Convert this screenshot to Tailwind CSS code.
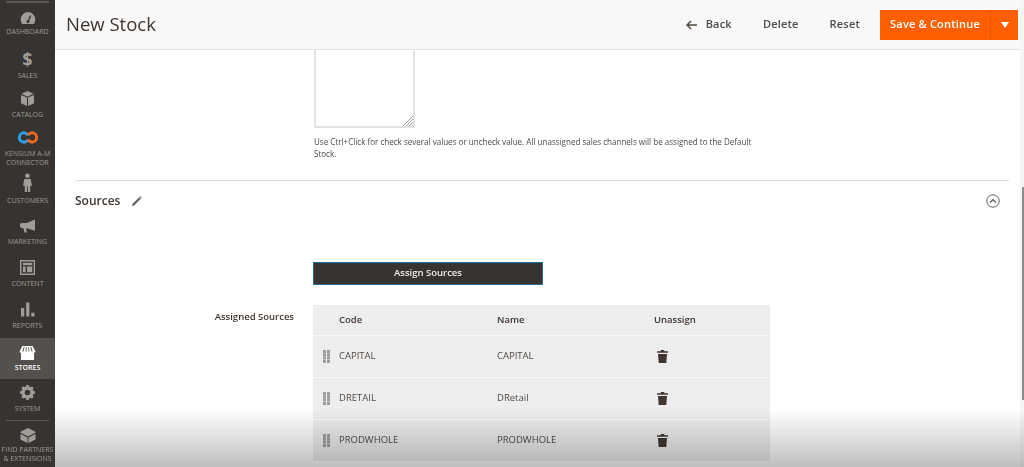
<!DOCTYPE html>
<html lang="en">
  <head>
    <meta charset="UTF-8" />
    <meta name="viewport" content="width=device-width, initial-scale=1.0" />
    <title>New Stock</title>
    <script src="https://cdn.jsdelivr.net/npm/@tailwindcss/browser@4"></script>
  </head>
  <body class="relative flex h-[467px] w-[1024px] overflow-hidden bg-white font-['Open_Sans',sans-serif] text-[#41362f] blur-[0.5px]">
    <!-- sidebar -->
    <nav class="flex h-[467px] w-[55px] shrink-0 flex-col bg-[#373330] text-center text-[7px] uppercase leading-[9px] text-[#a09c96]">
      <div class="mx-[6px] mt-[1px] h-[2px] bg-[#5c5853]"></div>
      <a class="flex h-[37px] flex-col items-center pt-[9px]">
        <svg class="h-[12px] w-[16px]" viewBox="0 0 18 14"><path fill="#a09c96" d="M9 0a8.500 8.500 0 0 0-8.500 8.500c0 2.300.7 4 1.800 5.500h13.400c1.100-1.500 1.800-3.200 1.800-5.500A8.500 8.500 0 0 0 9 0z"/><path stroke="#373330" stroke-width="1.600" d="M9 11 12 4"/><circle cx="9" cy="11" r="1.800" fill="#373330"/></svg>
        <span class="mt-[3px]">Dashboard</span>
      </a>
      <a class="flex h-[42px] flex-col items-center pt-[9px]">
        <span class="h-[20px] text-[18px] font-bold leading-[20px]">$</span>
        <span class="mt-[2px]">Sales</span>
      </a>
      <a class="flex h-[42px] flex-col items-center pt-[9px]">
        <svg class="h-[15px] w-[13px]" viewBox="0 0 14 16"><path fill="#a09c96" d="M7 0 13.500 3 7 6 .5 3zM0 4.200 6.400 7v9L0 13zM14 4.200 7.600 7v9l6.400-3z"/></svg>
        <span class="mt-[4px]">Catalog</span>
      </a>
      <a class="flex h-[47px] flex-col items-center pt-[7px]">
        <svg class="h-[13px] w-[22px]" viewBox="0 0 22 14" fill="none" stroke-width="3.200"><path stroke="#2d9fe6" d="M11 4.500C9.500 2.800 8.300 2 6.700 2a5 5 0 0 0 0 10c1.600 0 2.800-.6 4.300-2.300"/><path stroke="#f0681f" d="M11 9.500c1.500 1.700 2.700 2.500 4.300 2.500a5 5 0 0 0 0-10c-1.600 0-2.800.6-4.300 2.300"/></svg>
        <span class="mt-[5px] whitespace-nowrap">Kensium A-M<br />Connector</span>
      </a>
      <a class="flex h-[43px] flex-col items-center pt-[2px]">
        <svg class="h-[19px] w-[9px]" viewBox="0 0 10 21"><circle cx="5" cy="3" r="2.600" fill="#a09c96"/><path fill="#a09c96" d="M1.500 6.500h7L10 14H8v7H5.500v-6h-1v6H2v-7H0z"/></svg>
        <span class="mt-[4px]">Customers</span>
      </a>
      <a class="flex h-[40px] flex-col items-center pt-[5px]">
        <svg class="h-[14px] w-[15px]" viewBox="0 0 17 15"><path fill="#a09c96" d="M17 0v13L7.500 10H6.800l1 5H5L4 10H2L0 8V5l2-1h5.500z"/></svg>
        <span class="mt-[4px]">Marketing</span>
      </a>
      <a class="flex h-[42px] flex-col items-center pt-[6px]">
        <svg class="h-[15px] w-[15px]" viewBox="0 0 16 16" fill="#a09c96"><path fill-rule="evenodd" d="M0 0h16v16H0zM1.500 1.500v13h13v-13z"/><path d="M3 3h10v2.500H3zM3 7h3v6H3zM7.500 7H13v6H7.500z"/></svg>
        <span class="mt-[4px]">Content</span>
      </a>
      <a class="flex h-[42px] flex-col items-center pt-[6px]">
        <svg class="h-[15px] w-[14px]" viewBox="0 0 15 15" fill="#a09c96"><path d="M0 6h3.500v9H0zM5.500 0H9v15H5.500zM11 11h3.500v4H11z"/></svg>
        <span class="mt-[4px]">Reports</span>
      </a>
      <a class="flex h-[41px] flex-col items-center bg-[#54504c] pt-[8px] font-semibold text-white">
        <svg class="h-[14px] w-[17px]" viewBox="0 0 17 15" fill="#fff"><path fill-rule="evenodd" d="M3 0h11l3 6c0 1-1 1.500-1.500 1.500V15h-14V7.500C1 7.500 0 7 0 6zM4.500 1 3 6h1.200l1.300-5zM7 1l-.6 5h1.100V1zM9.500 1v5h1.100L10 1zM11.500 1l1.300 5H14l-1.500-5z"/></svg>
        <span class="mt-[3px]">Stores</span>
      </a>
      <a class="flex h-[41px] flex-col items-center pt-[6px]">
        <svg class="h-[15px] w-[15px]" viewBox="0 0 15 15"><circle cx="7.500" cy="7.500" r="4.500" fill="none" stroke="#a09c96" stroke-width="3.400"/><path stroke="#a09c96" stroke-width="2.600" d="M7.500 0v3M7.500 12v3M0 7.500h3M12 7.500h3M2.200 2.200l2 2M10.800 10.800l2 2M2.200 12.800l2-2M10.800 4.200l2-2"/></svg>
        <span class="mt-[4px]">System</span>
      </a>
      <div class="mx-[6px] h-px bg-[#5c5853]"></div>
      <a class="flex flex-col items-center pt-[7px]">
        <svg class="h-[15px] w-[16px]" viewBox="0 0 16 16" fill="#a09c96"><path d="M8 0 16 4v1L8 9 0 5V4zM0 6.500l7.500 3.700V16L0 12.300zM16 6.500 8.500 10.200V16l7.500-3.700z"/></svg>
        <span class="mt-[2px] whitespace-nowrap">Find Partners<br />&amp; Extensions</span>
      </a>
    </nav>

    <div class="flex min-w-0 flex-1 flex-col">
      <!-- page header -->
      <header class="flex h-[50px] shrink-0 items-center border-b border-[#e3e3e3] bg-[#f8f8f8] pl-[11px] pr-[2px]">
        <h1 class="text-[18.500px] leading-none text-[#41362f]">New Stock</h1>
        <div class="ml-auto flex items-center text-[11px] font-semibold tracking-[0.2px] text-[#514943]">
          <svg class="mr-[9px] h-[10px] w-[11px]" viewBox="0 0 11 10" fill="none" stroke="#514943" stroke-width="1.500"><path d="M11 5H1.500M5 1 1 5l4 4"/></svg>
          <span>Back</span>
          <span class="ml-[31px]">Delete</span>
          <span class="ml-[31px]">Reset</span>
          <div class="ml-[20px] flex h-[30px] w-[138px] items-center bg-[#ff5f00] text-white">
            <span class="w-[110px] text-center">Save &amp; Continue</span>
            <span class="flex h-full flex-1 items-center justify-center border-l border-[#e85600]">
              <svg class="h-[6px] w-[8px]" viewBox="0 0 8 6" fill="#fff"><path d="M0 0h8L4 6z"/></svg>
            </span>
          </div>
        </div>
      </header>

      <main class="flex flex-1 flex-col pl-[20px] pr-[11px]">
        <!-- sales channels field -->
        <div class="ml-[239px] w-[442px]">
          <div class="relative h-[78px] w-[101px] border-2 border-t-0 border-[#e2e2e2] bg-white">
            <svg class="absolute bottom-0 right-0 h-[10px] w-[10px]" viewBox="0 0 10 10" stroke="#8a8a8a" stroke-width="0.800"><path d="M0 10 10 0M3 10l7-7M6 10l4-4M8.500 10 10 8.500"/></svg>
          </div>
          <p class="mt-[8px] text-[8.060px] leading-[12px] text-[#514943]">Use Ctrl+Click for check several values or uncheck value. All unassigned sales channels will be assigned to the Default Stock.</p>
        </div>

        <!-- sources section -->
        <section class="mt-[20px] border-t border-[#dcdcdc]">
          <div class="flex h-[40px] items-center pr-[9px]">
            <h2 class="text-[12px] font-semibold text-[#41362f]">Sources</h2>
            <svg class="ml-[12px] h-[10px] w-[10px]" viewBox="0 0 10 10" fill="#6a655f"><path d="M0 10l.6-2.200L7.200 1.200 8.800 2.800 2.200 9.400zM7.900.5l.5-.3L9.800 1.600l-.3.500-.3.300L7.600.8z"/></svg>
            <svg class="ml-auto h-[14px] w-[14px]" viewBox="0 0 14 14" fill="none" stroke="#5f5f5f" stroke-width="1"><circle cx="7" cy="7" r="6.200"/><path stroke-width="1.400" d="M4 8.500 7 5.700l3 2.800"/></svg>
          </div>

          <div class="ml-[238px] mt-[41px] flex h-[23px] w-[230px] items-center justify-center border border-[#1f6fa8] bg-[#373330] text-[9.500px] font-semibold text-[#f2efec]">Assign Sources</div>

          <div class="mt-[20px] flex">
            <div class="w-[219px] pt-[5px] text-right text-[9.500px] font-semibold text-[#41362f]">Assigned Sources</div>
            <table class="ml-[19px] w-[457px] table-fixed bg-[#ededed] text-left text-[9.500px] text-[#514943]">
              <thead>
                <tr class="h-[30px] border-b border-[#f8f8f8] font-semibold text-[#41362f]">
                  <th class="w-[26px]"></th>
                  <th class="w-[158px] font-semibold">Code</th>
                  <th class="w-[157px] font-semibold">Name</th>
                  <th class="font-semibold">Unassign</th>
                </tr>
              </thead>
              <tbody>
                <tr class="h-[42px] border-b border-[#f8f8f8]">
                  <td class="pl-[10px]"><svg class="h-[13px] w-[7px]" viewBox="0 0 7 13" fill="#9c9c9c"><path d="M0 0h3v3H0zM4 0h3v3H4zM0 3.300h3v3H0zM4 3.300h3v3H4zM0 6.600h3v3H0zM4 6.600h3v3H4zM0 10h3v3H0zM4 10h3v3H4z"/></svg></td>
                  <td>CAPITAL</td>
                  <td>CAPITAL</td>
                  <td class="pl-[3px]"><svg class="h-[13px] w-[11px]" viewBox="0 0 11 13" fill="#41362f"><path d="M4 0h3l.6 1.300H11v1.500H0V1.300h3.400zM1 4h9l-.7 9H1.700z"/></svg></td>
                </tr>
                <tr class="h-[42px] border-b border-[#f8f8f8]">
                  <td class="pl-[10px]"><svg class="h-[13px] w-[7px]" viewBox="0 0 7 13" fill="#9c9c9c"><path d="M0 0h3v3H0zM4 0h3v3H4zM0 3.300h3v3H0zM4 3.300h3v3H4zM0 6.600h3v3H0zM4 6.600h3v3H4zM0 10h3v3H0zM4 10h3v3H4z"/></svg></td>
                  <td>DRETAIL</td>
                  <td>DRetail</td>
                  <td class="pl-[3px]"><svg class="h-[13px] w-[11px]" viewBox="0 0 11 13" fill="#41362f"><path d="M4 0h3l.6 1.300H11v1.500H0V1.300h3.400zM1 4h9l-.7 9H1.700z"/></svg></td>
                </tr>
                <tr class="h-[42px]">
                  <td class="pl-[10px]"><svg class="h-[13px] w-[7px]" viewBox="0 0 7 13" fill="#9c9c9c"><path d="M0 0h3v3H0zM4 0h3v3H4zM0 3.300h3v3H0zM4 3.300h3v3H4zM0 6.600h3v3H0zM4 6.600h3v3H4zM0 10h3v3H0zM4 10h3v3H4z"/></svg></td>
                  <td>PRODWHOLE</td>
                  <td>PRODWHOLE</td>
                  <td class="pl-[3px]"><svg class="h-[13px] w-[11px]" viewBox="0 0 11 13" fill="#41362f"><path d="M4 0h3l.6 1.300H11v1.500H0V1.300h3.400zM1 4h9l-.7 9H1.700z"/></svg></td>
                </tr>
              </tbody>
            </table>
          </div>
        </section>
      </main>
    </div>

    <!-- scrollbar track and thumb -->
    <aside class="w-[4px] shrink-0 bg-[#f6f6f6] pl-[2px] pt-[187px]">
      <div class="h-[213px] w-[2px] bg-[#8c8c8c]"></div>
    </aside>
    <!-- video shadow along the bottom edge -->
    <div class="pointer-events-none absolute bottom-0 left-[55px] right-0 h-[58px] bg-gradient-to-b from-black/0 to-black/25"></div>
  </body>
</html>
